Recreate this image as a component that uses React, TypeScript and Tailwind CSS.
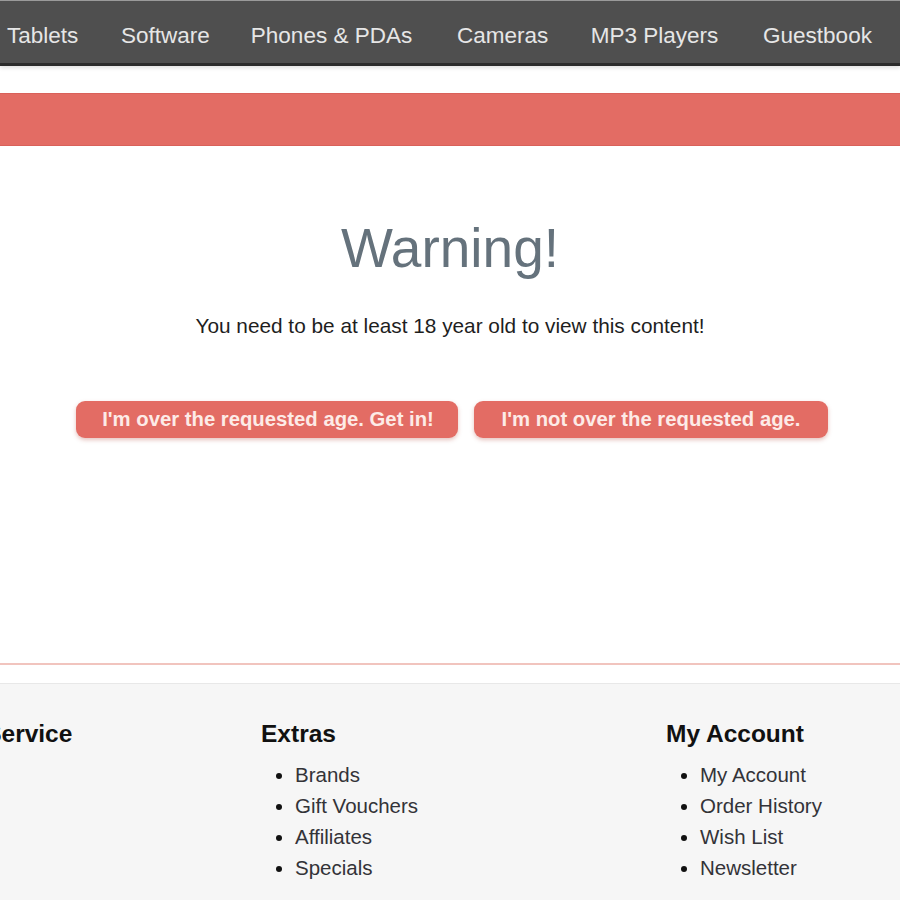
const navItems = [
  { label: "Tablets", width: "w-[70px]" },
  { label: "Software", width: "w-[85px]" },
  { label: "Phones & PDAs", width: "w-[163px]" },
  { label: "Cameras", width: "w-[89px]" },
  { label: "MP3 Players", width: "w-[129px]" },
  { label: "Guestbook", width: "w-[109px]" },
];

const footerCols = [
  { title: "Customer Service", width: "w-[397px]", links: [] as string[] },
  { title: "Extras", width: "w-[405px]", links: ["Brands", "Gift Vouchers", "Affiliates", "Specials"] },
  { title: "My Account", width: "w-[405px]", links: ["My Account", "Order History", "Wish List", "Newsletter"] },
];

export default function App() {
  return (
    <div className="h-[900px] w-[900px] overflow-hidden bg-white font-['Liberation_Sans',Arial,sans-serif]">
      <nav className="border-t border-[#9a9a9a] border-b-[3px] border-b-[#2c2c2c] bg-[#4f4f4f] shadow-[0_2px_4px_rgba(0,0,0,0.12)]">
        <ul className="flex h-[62px] items-center gap-[44px] whitespace-nowrap pl-[7px] pt-[8px] text-[22.5px] text-[#e6e6e6]">
          {navItems.map((item) => (
            <li key={item.label} className={`${item.width} shrink-0 text-center`}>
              {item.label}
            </li>
          ))}
        </ul>
      </nav>

      <div className="mt-[27px] h-[53px] border-y border-[#d9615a] bg-[#e36c64]" />

      <main className="flex h-[517px] flex-col items-center pt-[75px]">
        <h1 className="text-[55px] leading-none text-[#65727c]">Warning!</h1>
        <p className="mt-[38px] text-[20.8px] leading-[24px] text-[#1e1e1e]">
          You need to be at least 18 year old to view this content!
        </p>
        <div className="ml-[4px] mt-[63px] flex gap-4">
          <button className="h-[37px] w-[382px] rounded-[9px] bg-[#e36c64] pl-[2px] text-center text-[20.3px] font-bold text-[#fdebe7] shadow-[0_2px_4px_rgba(180,80,70,0.35)]">
            I'm over the requested age. Get in!
          </button>
          <button className="h-[37px] w-[354px] rounded-[9px] bg-[#e36c64] text-center text-[20.3px] font-bold text-[#fdebe7] shadow-[0_2px_4px_rgba(180,80,70,0.35)]">
            I'm not over the requested age.
          </button>
        </div>
      </main>

      <div className="h-[2px] bg-[#f1c4be]" />
      <div className="h-[18px] bg-white" />

      <footer className="h-[300px] border-t border-[#e8e8e8] bg-[#f6f6f6] pt-[35px]">
        <div className="ml-[-136px] flex whitespace-nowrap">
          {footerCols.map((col) => (
            <div key={col.title} className={`${col.width} shrink-0`}>
              <h3 className="text-[24.5px] font-bold leading-[30px] text-[#111]">{col.title}</h3>
              <ul className="mt-[10px] list-disc pl-[34px] text-[20.5px] leading-[31px] text-[#333338] marker:text-[#111]">
                {col.links.map((link) => (
                  <li key={link}>{link}</li>
                ))}
              </ul>
            </div>
          ))}
        </div>
      </footer>
    </div>
  );
}
